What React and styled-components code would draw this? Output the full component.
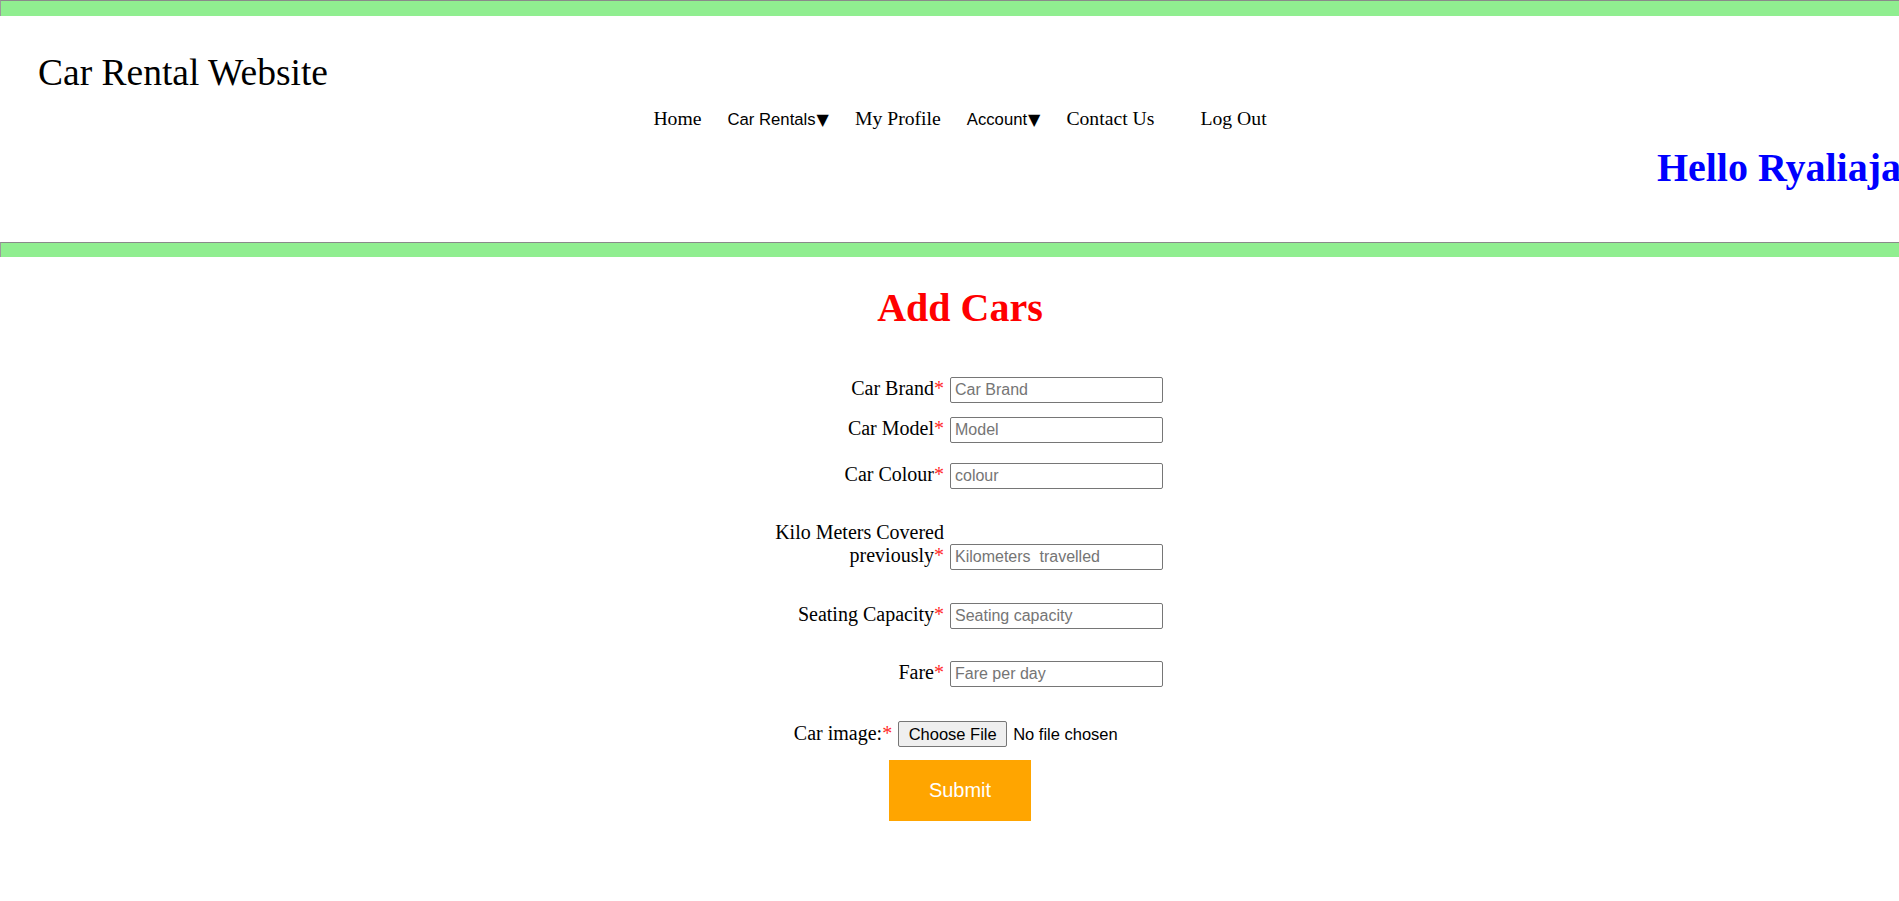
import React from "react";
import styled, { createGlobalStyle } from "styled-components";

const GlobalStyle = createGlobalStyle`
  html, body {
    margin: 0;
    padding: 0;
    overflow-x: hidden;
    background: #ffffff;
    font-family: "Liberation Serif", "Times New Roman", serif;
    color: #000;
  }
`;

const Page = styled.div`
  width: 1920px;
`;

const Rule = styled.div`
  box-sizing: border-box;
  width: 100%;
  height: ${(p) => p.$h}px;
  margin-top: ${(p) => p.$top || 0}px;
  background: #90ee90;
  border-top: 1px solid #8a8a8a;
  border-left: 1px solid #9a9a9a;
`;

const Header = styled.header`
  display: flex;
  flex-direction: column;
`;

const Title = styled.div`
  margin: 36px 0 0 38px;
  font-size: 37.5px;
  line-height: 42px;
`;

const Nav = styled.nav`
  display: flex;
  justify-content: center;
  align-items: baseline;
  height: 22px;
  margin-top: 13px;
  line-height: 22px;
`;

const NavLink = styled.a`
  font-family: "Liberation Serif", "Times New Roman", serif;
  font-size: 19.7px;
  line-height: 22px;
  color: #000;
  text-decoration: none;
  padding: 0 13px;
  margin-left: ${(p) => p.$extra || 0}px;
  cursor: pointer;
`;

const NavDrop = styled.button`
  font-family: "Liberation Sans", Arial, sans-serif;
  font-size: 16.7px;
  line-height: 22px;
  color: #000;
  background: none;
  border: none;
  padding: 0 13px;
  cursor: pointer;
`;

const Caret = styled.span`
  font-family: "DejaVu Sans", sans-serif;
  font-size: 16px;
  line-height: 1;
  margin-left: 1px;
`;

const Greeting = styled.div`
  margin-top: 16px;
  padding-right: 19px;
  text-align: right;
  color: #0000ff;
  font-weight: bold;
  font-size: 40px;
  line-height: 46px;
`;

const Heading = styled.h1`
  margin: 28px 0 0;
  text-align: center;
  color: #ff0000;
  font-weight: bold;
  font-size: 40px;
  line-height: 46px;
`;

const Form = styled.form`
  display: flex;
  flex-direction: column;
  align-items: center;
  margin-top: 46px;
`;

const Row = styled.div`
  display: flex;
  align-items: last baseline;
  width: 406px;
  margin-top: ${(p) => p.$top || 0}px;
`;

const Label = styled.label`
  box-sizing: border-box;
  width: 193px;
  padding-right: 6px;
  text-align: right;
  font-size: 20px;
  line-height: 23px;
`;

const Star = styled.span`
  color: #ff2a2a;
`;

const Input = styled.input`
  box-sizing: border-box;
  width: 213px;
  height: 26px;
  padding: 0 4px;
  border: 1px solid #767676;
  border-radius: 2px;
  font-family: "Liberation Sans", Arial, sans-serif;
  font-size: 16px;
  color: #000;
  background: #fff;
  &::placeholder {
    color: #757575;
  }
`;

const FileRow = styled.div`
  display: flex;
  justify-content: center;
  align-items: baseline;
  gap: 6px;
  margin-top: ${(p) => p.$top || 0}px;
`;

const FileLabel = styled.label`
  font-size: 20px;
  line-height: 23px;
`;

const FileInput = styled.input`
  width: 228px;
  font-family: "Liberation Sans", Arial, sans-serif;
  font-size: 16.5px;
  color: #000;
  &::file-selector-button {
    box-sizing: border-box;
    width: 109px;
    height: 26px;
    padding: 0;
    margin-right: 6px;
    border: 1px solid #767676;
    border-radius: 2px;
    background: #efefef;
    font-family: "Liberation Sans", Arial, sans-serif;
    font-size: 16.5px;
    color: #000;
  }
`;

const Submit = styled.button`
  width: 142px;
  height: 61px;
  margin-top: 13px;
  border: none;
  background: #ffa500;
  color: #fff;
  font-family: "Liberation Sans", Arial, sans-serif;
  font-size: 20px;
  cursor: pointer;
`;

const fields = [
  { label: "Car Brand", ph: "Car Brand", top: 0 },
  { label: "Car Model", ph: "Model", top: 14 },
  { label: "Car Colour", ph: "colour", top: 20 },
  { label: "Kilo Meters Covered previously", ph: "Kilometers  travelled", top: 32 },
  { label: "Seating Capacity", ph: "Seating capacity", top: 33 },
  { label: "Fare", ph: "Fare per day", top: 32 },
];

export default function App() {
  return (
    <Page>
      <GlobalStyle />
      <Rule $h={16} />
      <Header>
        <Title>Car Rental Website</Title>
        <Nav>
          <NavLink>Home</NavLink>
          <NavDrop type="button">
            Car Rentals<Caret>▼</Caret>
          </NavDrop>
          <NavLink>My Profile</NavLink>
          <NavDrop type="button">
            Account<Caret>▼</Caret>
          </NavDrop>
          <NavLink>Contact Us</NavLink>
          <NavLink $extra={20}>Log Out</NavLink>
        </Nav>
        <Greeting>Hello Ryaliaja</Greeting>
      </Header>
      <Rule $h={15} $top={51} />
      <Heading>Add Cars</Heading>
      <Form onSubmit={(e) => e.preventDefault()}>
        {fields.map((f) => (
          <Row key={f.label} $top={f.top}>
            <Label>
              {f.label}
              <Star>*</Star>
            </Label>
            <Input placeholder={f.ph} />
          </Row>
        ))}
        <FileRow $top={34}>
          <FileLabel>
            Car image:<Star>*</Star>
          </FileLabel>
          <FileInput type="file" />
        </FileRow>
        <Submit type="submit">Submit</Submit>
      </Form>
    </Page>
  );
}
